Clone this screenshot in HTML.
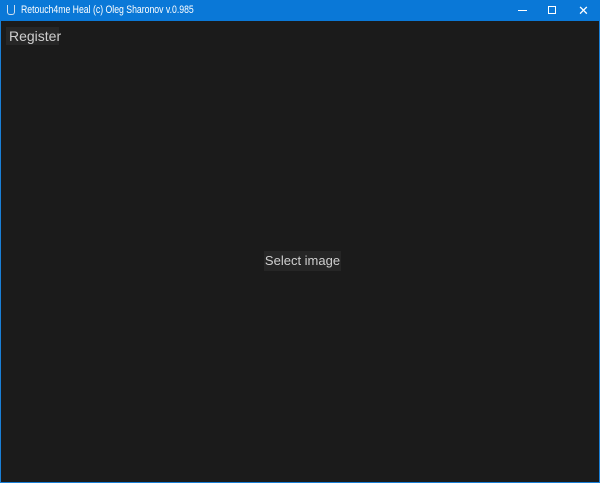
<!DOCTYPE html>
<html><head><style>
body{margin:0;width:600px;height:483px;overflow:hidden;background:#1b1b1b;font-family:"Liberation Sans",sans-serif;}
.tb{position:absolute;left:0;top:0;width:600px;height:21px;background:#0a78d7;color:#fff;font-size:11px;}
.frame{position:absolute;left:0;top:0;width:598px;height:481px;border:1px solid #1a7fd6;}
.btn{position:absolute;background:#262626;color:#cfcfcf;font-size:13px;}
</style></head><body>
<div class="frame"></div>
<div class="tb">
<div style="position:absolute;left:7px;top:5px;width:8px;height:10px;border:1.5px solid #cde;border-top:none;border-radius:0 0 3px 3px;box-sizing:border-box"></div>
<span style="position:absolute;left:21px;top:4px;transform:scaleX(0.79);transform-origin:0 0;white-space:nowrap">Retouch4me Heal (c) Oleg Sharonov v.0.985</span>
<div style="position:absolute;left:518px;top:10px;width:9px;height:1px;background:#fff"></div>
<div style="position:absolute;left:548px;top:6px;width:8px;height:8px;border:1px solid #fff;box-sizing:border-box"></div>
<span style="position:absolute;left:578px;top:3px;font-size:13px">✕</span>
</div>
<div class="btn" style="left:6px;top:27px;width:50px;height:18px;line-height:18px;padding-left:3px;font-size:14px">Register</div>
<div class="btn" style="left:264px;top:251px;width:77px;height:20px;line-height:20px;text-align:center">Select image</div>
</body></html>
